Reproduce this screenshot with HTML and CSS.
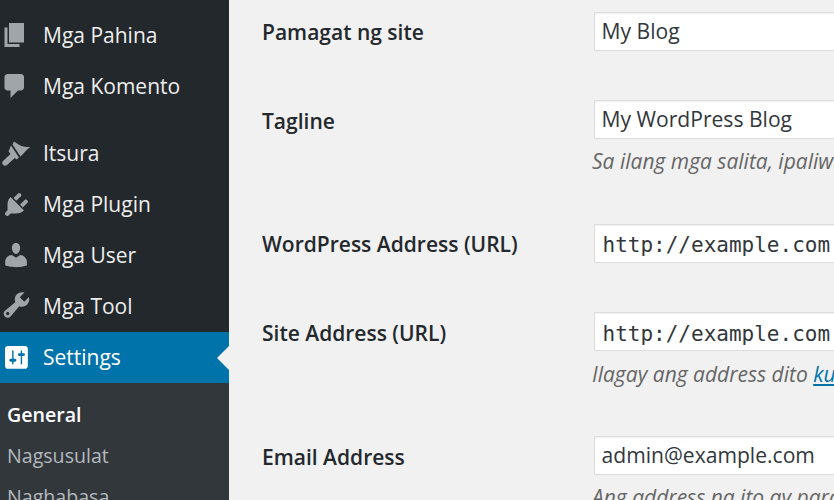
FILE: index.html
```
<!DOCTYPE html>
<html lang="tl">
<head>
<meta charset="utf-8">
<title>General Settings</title>
<link rel="stylesheet" href="styles.css">
</head>
<body>
<div class="page">
<nav class="sidebar">
  <ul class="menu">
    <li class="item"><svg class="icon" viewBox="0 0 20 20"><path d="M6 15V2h10v13H6zm-1 1h8v2H3V5h2v11z"/></svg><span>Mga Pahina</span></li>
    <li class="item"><svg class="icon" viewBox="0 0 20 20"><path d="M5 2h9c1.1 0 2 .9 2 2v7c0 1.1-.9 2-2 2h-2l-5 5v-5H5c-1.1 0-2-.9-2-2V4c0-1.1.9-2 2-2z"/></svg><span>Mga Komento</span></li>
    <li class="item sep"><svg class="icon" viewBox="0 0 30 30"><path d="M14 3.500C17 5.500 20 8 23.500 8.500 26 8.900 28 9 30.500 9 27.500 10.500 25.500 13.500 23 16L20.500 18.500 12.500 6.500zM11 7.500L19 19.500 16.500 21.500 14.800 20 7 27C6 28 4 27.800 3 26.800 2 25.800 2 24 3 23L10.500 16 8.500 13.500z"/></svg><span>Itsura</span></li>
    <li class="item"><svg class="icon" viewBox="-1 -0.3 20 20"><path d="M13.11 4.36L9.87 7.6 8 5.73l3.24-3.24c.35-.34 1.05-.2 1.56.32.52.51.66 1.21.31 1.55zm-8 1.77l.91-1.12 9.01 9.01-1.19.84c-.71.71-2.63 1.16-3.82 1.16H6.14L4.9 17.26c-.59.59-1.54.59-2.12 0-.59-.58-.59-1.53 0-2.12l1.24-1.24v-3.88c0-1.13.4-3.19 1.09-3.89zm7.26 3.97l3.24-3.24c.34-.35 1.04-.21 1.55.31.52.51.66 1.21.31 1.55l-3.24 3.25z"/></svg><span>Mga Plugin</span></li>
    <li class="item"><svg class="icon" viewBox="-0.7 0 20 20"><path d="M10 9.25c-2.27 0-2.73-3.44-2.73-3.44C7 4.02 7.82 2 9.97 2c2.16 0 2.98 2.02 2.71 3.81 0 0-.41 3.44-2.68 3.44zm0 2.57L12.72 10c2.39 0 4.52 2.33 4.52 4.53v2.49s-3.65 1.13-7.24 1.13c-3.65 0-7.24-1.13-7.24-1.13v-2.49c0-2.25 1.94-4.48 4.47-4.48z"/></svg><span>Mga User</span></li>
    <li class="item"><svg class="icon" viewBox="-0.3 1.3 18.75 18.75"><path d="M16.68 9.77c-1.34 1.34-3.3 1.67-4.95.99l-5.41 6.52c-.99.99-2.59.99-3.58 0s-.99-2.59 0-3.57l6.52-5.42c-.68-1.65-.35-3.61.99-4.95 1.28-1.28 3.12-1.62 4.72-1.06l-2.89 2.89 2.82 2.82 2.86-2.87c.53 1.58.18 3.39-1.08 4.67zM3.81 16.21c.4.39 1.04.39 1.43 0 .4-.4.4-1.04 0-1.43-.39-.4-1.03-.4-1.43 0-.39.39-.39 1.03 0 1.43z"/></svg><span>Mga Tool</span></li>
    <li class="item active"><svg class="icon" viewBox="-1.5 -0.8 21 21"><path d="M18 16V4c0-1.1-.9-2-2-2H4c-1.1 0-2 .9-2 2v12c0 1.1.9 2 2 2h12c1.1 0 2-.9 2-2zM8 11h1c.55 0 1 .45 1 1s-.45 1-1 1H8v1.5c0 .28-.22.5-.5.5s-.5-.22-.5-.5V13H6c-.55 0-1-.45-1-1s.45-1 1-1h1V5.5c0-.28.22-.5.5-.5s.5.22.5.5V11zm5-2h-1c-.55 0-1-.45-1-1s.45-1 1-1h1V5.5c0-.28.22-.5.5-.5s.5.22.5.5V7h1c.55 0 1 .45 1 1s-.45 1-1 1h-1v5.5c0 .28-.22.5-.5.5s-.5-.22-.5-.5V9z"/></svg><span>Settings</span></li>
  </ul>
  <ul class="submenu">
    <li class="sub current">General</li>
    <li class="sub">Nagsusulat</li>
    <li class="sub">Naghabasa</li>
  </ul>
</nav>
<main class="content">
  <div class="row r-title">
    <label class="label">Pamagat ng site</label>
    <div class="field"><input class="input" type="text" value="My Blog"></div>
  </div>
  <div class="row r-tagline">
    <label class="label">Tagline</label>
    <div class="field"><input class="input" type="text" value="My WordPress Blog">
      <p class="desc">Sa ilang mga salita, ipaliwanag kung tungkol saan ang site na ito.</p></div>
  </div>
  <div class="row r-wp">
    <label class="label">WordPress Address (URL)</label>
    <div class="field"><input class="input mono" type="text" value="http://example.com"></div>
  </div>
  <div class="row r-site">
    <label class="label">Site Address (URL)</label>
    <div class="field"><input class="input mono" type="text" value="http://example.com">
      <p class="desc">Ilagay ang address dito <a class="link" href="#">kung gusto mong iba ang home page ng iyong site</a></p></div>
  </div>
  <div class="row r-email">
    <label class="label">Email Address</label>
    <div class="field"><input class="input" type="text" value="admin@example.com">
      <p class="desc">Ang address na ito ay para sa mga layuning pang-admin</p></div>
  </div>
</main>
</div>
</body>
</html>
```
FILE: styles.css
```
* { box-sizing: border-box; }
html, body { margin: 0; padding: 0; height: 100%; overflow: hidden; }
body { background: #f1f1f1; font-family: "Open Sans", sans-serif; color: #23282d; }
.page { display: flex; width: 834px; height: 500px; overflow: hidden; }

.sidebar { flex: 0 0 229px; background: #23282d; padding-top: 9px; }
.menu, .submenu { list-style: none; margin: 0; padding: 0; }
.item { position: relative; display: flex; align-items: center; height: 51px; color: #eee; font-size: 21px; }
.item span { margin-left: 13px; }
.item.sep { margin-top: 16px; }
.icon { flex: 0 0 30px; width: 30px; height: 30px; fill: #a0a5aa; }
.item.active { height: 51px; margin-top: 1px; padding-bottom: 2px; background: #0073aa; color: #fff; }
.item.active .icon { fill: #fff; }
.item.active::after { content: ""; position: absolute; right: 0; top: 14px; border: 12px solid transparent; border-right-color: #f1f1f1; border-left-width: 0; }
.submenu { background: #32373c; padding-top: 11px; height: 117px; }
.sub { height: 41px; line-height: 41px; padding-left: 7px; font-size: 19.6px; color: #b4b9be; }
.sub.current { color: #fff; font-weight: 600; }

.content { flex: 1; min-width: 0; padding-left: 33px; }
.row { display: flex; }
.r-title { padding-top: 12px; height: 100px; }
.r-tagline { height: 124px; }
.r-wp { height: 88px; }
.r-site { height: 124px; }
.label { flex: 0 0 332px; font-size: 21px; font-weight: 600; line-height: 41px; }
.r-tagline .label, .r-site .label, .r-email .label { line-height: 43px; }
.field { flex: 0 0 auto; width: 420px; }
.input { display: block; width: 100%; height: 39px; margin: 0; padding: 0 8px 2px 6.5px; border: 1.5px solid #ddd; border-radius: 0; background: #fff; box-shadow: inset 0 1px 2px rgba(0,0,0,.07); font-family: "Open Sans", sans-serif; font-size: 21.1px; color: #32373c; outline: 0; }
.input.mono { font-family: "DejaVu Sans Mono", monospace; font-size: 21px; padding: 3px 8px 0 7.5px; }
.r-site .input.mono { padding-top: 5px; }
.desc { margin: 7px 0 0 -2px; font-size: 21px; line-height: 30px; font-style: italic; color: #666; white-space: nowrap; }
.r-site .desc { margin-top: 8px; }
.link { color: #0073aa; }
```
